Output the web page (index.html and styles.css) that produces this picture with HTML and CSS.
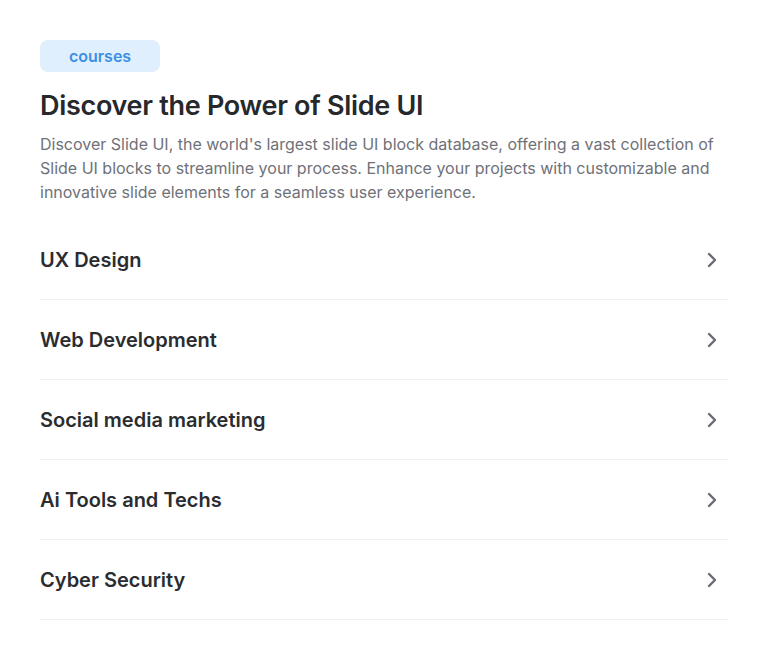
FILE: index.html
```html
<!DOCTYPE html>
<html lang="en">
<head>
<meta charset="utf-8">
<title>Courses</title>
<link rel="stylesheet" href="styles.css">
</head>
<body>
<section class="courses">
  <span class="badge">courses</span>
  <h1 class="title">Discover the Power of Slide UI</h1>
  <p class="lead">Discover Slide UI, the world's largest slide UI block database, offering a vast collection of Slide UI blocks to streamline your process. Enhance your projects with customizable and innovative slide elements for a seamless user experience.</p>
  <ul class="list">
    <li class="item"><span class="item-label">UX Design</span><svg class="chev" viewBox="0 0 24 24" width="24" height="24"><path d="M9 6l6 6-6 6"/></svg></li>
    <li class="item"><span class="item-label">Web Development</span><svg class="chev" viewBox="0 0 24 24" width="24" height="24"><path d="M9 6l6 6-6 6"/></svg></li>
    <li class="item"><span class="item-label">Social media marketing</span><svg class="chev" viewBox="0 0 24 24" width="24" height="24"><path d="M9 6l6 6-6 6"/></svg></li>
    <li class="item"><span class="item-label">Ai Tools and Techs</span><svg class="chev" viewBox="0 0 24 24" width="24" height="24"><path d="M9 6l6 6-6 6"/></svg></li>
    <li class="item"><span class="item-label">Cyber Security</span><svg class="chev" viewBox="0 0 24 24" width="24" height="24"><path d="M9 6l6 6-6 6"/></svg></li>
  </ul>
</section>
</body>
</html>
```

FILE: styles.css
```css
* { box-sizing: border-box; }
html, body { margin: 0; padding: 0; background: #ffffff; }
body { font-family: Inter, "Liberation Sans", sans-serif; }

.courses {
  padding: 40px;
  display: flex;
  flex-direction: column;
  align-items: flex-start;
}

.badge {
  display: inline-flex;
  align-items: center;
  justify-content: center;
  width: 120px;
  height: 32px;
  border-radius: 8px;
  background: #dfeffd;
  color: #3d8fe4;
  font-size: 16px;
  font-weight: 600;
}

.title {
  margin: 16px 0 0;
  font-size: 27px;
  line-height: 36px;
  font-weight: 600;
  letter-spacing: -0.3px;
  color: #26282c;
}

.lead {
  margin: 8px 0 0;
  font-size: 16px;
  line-height: 24px;
  color: #6f7178;
}

.list {
  list-style: none;
  margin: 16px 0 0;
  padding: 0;
  width: 100%;
}

.item {
  display: flex;
  align-items: center;
  justify-content: space-between;
  height: 80px;
  border-bottom: 1px solid #f1f1f2;
}

.item-label {
  font-size: 20px;
  font-weight: 600;
  color: #2a2c30;
}

.chev {
  margin-right: 4px;
  fill: none;
  stroke: #686b72;
  stroke-width: 2.4;
  stroke-linecap: round;
  stroke-linejoin: round;
}
```
